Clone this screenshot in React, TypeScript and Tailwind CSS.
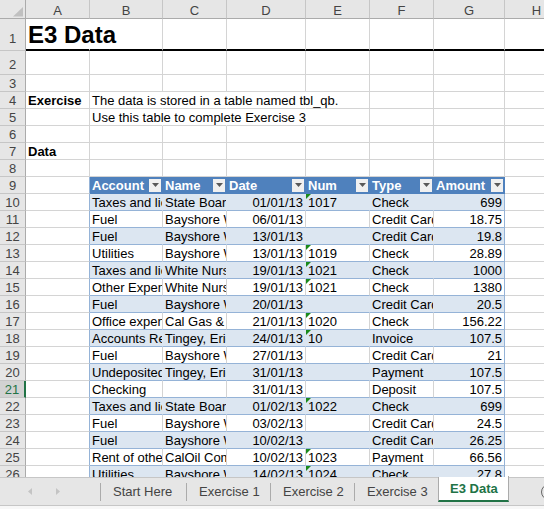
import React from 'react';

const COLW = ['w-[64px]', 'w-[73px]', 'w-[64px]', 'w-[79px]', 'w-[64px]', 'w-[64px]', 'w-[71px]', 'w-[64px]'];
const LETTERS = ['A', 'B', 'C', 'D', 'E', 'F', 'G', 'H'];

const tableRows: string[][] = [
  ['Taxes and licenses', 'State Board of Equalization', '01/01/13', '1017', 'Check', '699'],
  ['Fuel', 'Bayshore Water', '06/01/13', '', 'Credit Card', '18.75'],
  ['Fuel', 'Bayshore Water', '13/01/13', '', 'Credit Card', '19.8'],
  ['Utilities', 'Bayshore Water', '13/01/13', '1019', 'Check', '28.89'],
  ['Taxes and licenses', 'White Nursery', '19/01/13', '1021', 'Check', '1000'],
  ['Other Expenses', 'White Nursery', '19/01/13', '1021', 'Check', '1380'],
  ['Fuel', 'Bayshore Water', '20/01/13', '', 'Credit Card', '20.5'],
  ['Office expenses', 'Cal Gas & Electric', '21/01/13', '1020', 'Check', '156.22'],
  ['Accounts Receivable', 'Tingey, Eric', '24/01/13', '10', 'Invoice', '107.5'],
  ['Fuel', 'Bayshore Water', '27/01/13', '', 'Credit Card', '21'],
  ['Undeposited Funds', 'Tingey, Eric', '31/01/13', '', 'Payment', '107.5'],
  ['Checking', '', '31/01/13', '', 'Deposit', '107.5'],
  ['Taxes and licenses', 'State Board of Equalization', '01/02/13', '1022', 'Check', '699'],
  ['Fuel', 'Bayshore Water', '03/02/13', '', 'Credit Card', '24.5'],
  ['Fuel', 'Bayshore Water', '10/02/13', '', 'Credit Card', '26.25'],
  ['Rent of other', 'CalOil Company', '10/02/13', '1023', 'Payment', '66.56'],
  ['Utilities', 'Bayshore Water', '14/02/13', '1024', 'Check', '27.8'],
];

const headers = ['Account', 'Name', 'Date', 'Num', 'Type', 'Amount'];

function RowHeader({ n, h, pad, sel }: { n: number; h: string; pad: string; sel?: boolean }) {
  return (
    <div
      className={`${h} ${pad} w-[26px] shrink-0 border-b border-b-[#c6c6c6] flex items-start justify-center leading-[17px] ${
        sel
          ? 'bg-[#d2d2d2] text-[#217346] border-r-2 border-r-[#217346]'
          : 'bg-[#e6e6e6] text-[#444444] border-r border-r-[#ababab]'
      }`}
    >
      {n}
    </div>
  );
}

function Cell({
  w,
  h = 'h-[17px]',
  r = 'border-r-[#d4d4d4]',
  b = 'border-b border-b-[#d4d4d4]',
  cls = 'overflow-hidden',
  children,
}: {
  w: string;
  h?: string;
  r?: string;
  b?: string;
  cls?: string;
  children?: React.ReactNode;
}) {
  return <div className={`${w} ${h} shrink-0 border-r ${r} ${b} whitespace-nowrap px-[2px] leading-[17px] ${cls}`}>{children}</div>;
}

function Tri() {
  return <span className="absolute left-0 top-0 w-0 h-0 border-t-[5px] border-t-[#1a8a1a] border-r-[5px] border-r-transparent" />;
}

function Dd() {
  return (
    <span className="w-[12px] h-[13px] mr-[1px] shrink-0 self-center bg-[#f0f0f0] flex items-center justify-center">
      <svg width="7" height="4" viewBox="0 0 7 4">
        <path d="M0 0h7L3.5 4z" fill="#595959" />
      </svg>
    </span>
  );
}

function PlainRow({ n, cells = {}, bold = {}, hidden = [] }: { n: number; cells?: Record<number, string>; bold?: Record<number, boolean>; hidden?: number[] }) {
  return (
    <div className="flex w-max">
      <RowHeader n={n} h="h-[17px]" pad="" />
      {COLW.map((w, i) => (
        <Cell
          key={i}
          w={w}
          r={hidden.includes(i) ? 'border-r-transparent' : 'border-r-[#d4d4d4]'}
          cls={hidden.includes(i) || cells[i] ? 'overflow-visible' : 'overflow-hidden'}
        >
          {cells[i] ? <span className={bold[i] ? 'font-bold' : ''}>{cells[i]}</span> : null}
        </Cell>
      ))}
    </div>
  );
}

function TableRow({ n, data, blue }: { n: number; data: string[]; blue: boolean }) {
  return (
    <div className="flex w-max">
      <RowHeader n={n} h="h-[17px]" pad="" sel={n === 21} />
      <Cell w={COLW[0]} r="border-r-[#95b3d7]" />
      {data.map((t, i) => {
        const last = i === 5;
        const r = last ? 'border-r-[#95b3d7]' : blue ? 'border-r-[#dce6f1]' : 'border-r-[#d4d4d4]';
        const right = i === 2 || i === 5;
        return (
          <div
            key={i}
            className={`${COLW[i + 1]} h-[17px] shrink-0 border-r border-b border-b-[#95b3d7] ${r} ${
              blue ? 'bg-[#dce6f1]' : 'bg-white'
            } relative overflow-hidden whitespace-nowrap px-[2px] leading-[17px] ${right ? 'text-right' : 'text-left'}`}
          >
            {i === 3 && t ? <Tri /> : null}
            {t}
          </div>
        );
      })}
      <Cell w={COLW[7]} />
    </div>
  );
}

function ArrowL() {
  return (
    <svg width="4" height="7" viewBox="0 0 4 7">
      <path d="M4 0v7L0 3.5z" fill="#c4c4c4" />
    </svg>
  );
}
function ArrowR() {
  return (
    <svg width="4" height="7" viewBox="0 0 4 7">
      <path d="M0 0v7L4 3.5z" fill="#c4c4c4" />
    </svg>
  );
}

function Sep() {
  return <div className="w-px h-[18px] bg-[#ababab] shrink-0" />;
}

export default function App() {
  return (
    <div className="w-[544px] h-[509px] overflow-hidden flex flex-col bg-white font-['Liberation_Sans',Arial,sans-serif] text-[13px] text-black">
      <div className="flex-1 overflow-hidden">
        {/* column headers */}
        <div className="flex w-max">
          <div className="w-[26px] h-[19px] shrink-0 bg-[#e6e6e6] border-r border-b border-r-[#ababab] border-b-[#ababab]">
            <svg width="25" height="18" viewBox="0 0 25 18">
              <path d="M13 16.5H23V7z" fill="#c0c0c0" />
            </svg>
          </div>
          {COLW.map((w, i) => (
            <div
              key={i}
              className={`${w} h-[19px] shrink-0 bg-[#e6e6e6] border-r border-b border-r-[#c6c6c6] border-b-[#ababab] text-center text-[#444444] leading-[18px] pt-[2px] overflow-hidden`}
            >
              {LETTERS[i]}
            </div>
          ))}
        </div>

        {/* row 1 */}
        <div className="flex w-max">
          <RowHeader n={1} h="h-[32px]" pad="pt-[11px]" />
          {COLW.map((w, i) => (
            <div
              key={i}
              className={`${w} h-[32px] shrink-0 border-r border-b-2 border-b-black ${
                i === 0 ? 'border-r-transparent' : 'border-r-[#d4d4d4]'
              } flex items-end pl-[2px] whitespace-nowrap`}
            >
              {i === 0 ? <span className="text-[24px] font-bold leading-[28px]">E3 Data</span> : null}
            </div>
          ))}
        </div>

        {/* row 2 */}
        <div className="flex w-max">
          <RowHeader n={2} h="h-[24px]" pad="pt-[5px]" />
          {COLW.map((w, i) => (
            <Cell key={i} w={w} h="h-[24px]" />
          ))}
        </div>

        <PlainRow n={3} />
        <PlainRow n={4} cells={{ 0: 'Exercise', 1: 'The data is stored in a table named tbl_qb.' }} bold={{ 0: true }} hidden={[1, 2, 3]} />
        <PlainRow n={5} cells={{ 1: 'Use this table to complete Exercise 3' }} hidden={[1, 2, 3]} />
        <PlainRow n={6} />
        <PlainRow n={7} cells={{ 0: 'Data' }} bold={{ 0: true }} />
        <PlainRow n={8} />

        {/* row 9 table header */}
        <div className="flex w-max">
          <RowHeader n={9} h="h-[17px]" pad="" />
          <Cell w={COLW[0]} r="border-r-[#95b3d7]" />
          {headers.map((t, i) => (
            <div
              key={i}
              className={`${COLW[i + 1]} h-[17px] shrink-0 border-r border-b border-r-[#4f81bd] border-b-[#4f81bd] bg-[#4f81bd] text-white font-bold flex items-start justify-between pl-[2px] leading-[17px] whitespace-nowrap overflow-hidden`}
            >
              <span>{t}</span>
              <Dd />
            </div>
          ))}
          <Cell w={COLW[7]} />
        </div>

        {tableRows.map((d, i) => (
          <TableRow key={i} n={10 + i} data={d} blue={i % 2 === 0} />
        ))}
      </div>

      {/* sheet tab bar */}
      <div className="h-[28px] shrink-0 border-t border-t-[#c6c6c6] bg-[#e6e6e6] flex items-center text-[#444444]">
        <div className="w-[100px] h-full shrink-0 flex items-center pl-[28px] gap-[24px]">
          <ArrowL />
          <ArrowR />
        </div>
        <Sep />
        <div className="w-[85px] shrink-0 pl-[12px] leading-[17px] whitespace-nowrap">Start Here</div>
        <Sep />
        <div className="w-[83px] shrink-0 pl-[12px] leading-[17px] whitespace-nowrap">Exercise 1</div>
        <Sep />
        <div className="w-[83px] shrink-0 pl-[12px] leading-[17px] whitespace-nowrap">Exercise 2</div>
        <Sep />
        <div className="w-[83px] shrink-0 pl-[12px] leading-[17px] whitespace-nowrap">Exercise 3</div>
        <div className="w-[71px] h-[26px] -mt-[2px] self-start shrink-0 bg-white border-x border-x-[#ababab] border-b-2 border-b-[#217346] pl-[11px] pt-[4px] leading-[17px] font-bold text-[#217346] whitespace-nowrap">
          E3 Data
        </div>
        <div className="ml-[31px] shrink-0 flex items-center">
          <svg width="18" height="18" viewBox="0 0 18 18">
            <circle cx="9" cy="9" r="7.5" fill="none" stroke="#666666" strokeWidth="1" />
            <path d="M9 5v8M5 9h8" stroke="#666666" strokeWidth="1" />
          </svg>
        </div>
      </div>
      <div className="h-[4px] shrink-0 border-t border-t-[#c6c6c6] bg-[#f7f7f7]" />
    </div>
  );
}
